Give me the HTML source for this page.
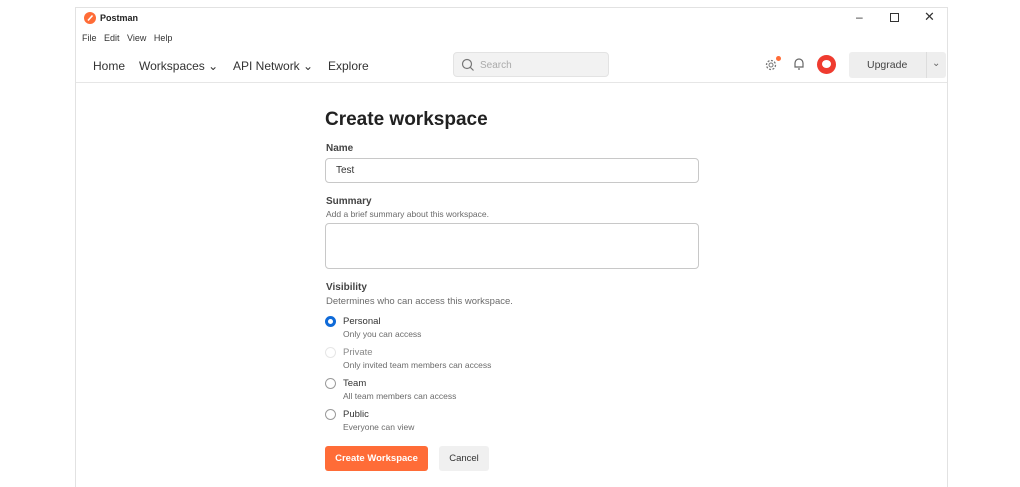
<!DOCTYPE html>
<html><head><meta charset="utf-8"><style>
*{margin:0;padding:0;box-sizing:border-box}
body{width:1020px;height:481px;background:#fff;font-family:"Liberation Sans",sans-serif;position:relative;overflow:hidden;color:#212121}
.a{position:absolute;white-space:nowrap}
.win{position:absolute;left:75px;top:7px;width:873px;height:480px;border:1px solid #e2e2e2;border-bottom:none}
.nav{font-size:12px;color:#333}
.lbl{font-size:10px;font-weight:bold;color:#444}
.sub{font-size:8.5px;color:#6b6b6b}
.inp{position:absolute;left:325px;width:374px;border:1px solid #c8c8c8;border-radius:4px;background:#fff}
.rad{position:absolute;left:325px;width:11px;height:11px;border:1px solid #9a9a9a;border-radius:50%}
.rt{font-size:9.5px;color:#333}
</style></head><body>
<div class="win"></div>
<svg class="a" style="left:84px;top:12px" width="12" height="12"><circle cx="6" cy="6" r="6" fill="#ff6c37"/><path d="M4 8.5 L8.5 3.5" stroke="#fff" stroke-width="1.6"/></svg>
<div class="a" style="left:100px;top:13px;font-size:9px;font-weight:bold;color:#222">Postman</div>
<div class="a" style="left:82px;top:33px;font-size:9px;color:#333;word-spacing:5px">File Edit View Help</div>
<div class="a" style="left:856px;top:10px;font-size:12px;color:#333">–</div>
<div class="a" style="left:890px;top:13px;width:9px;height:9px;border:1.3px solid #333"></div>
<div class="a" style="left:924px;top:9px;font-size:13px;color:#333">✕</div>
<div class="a nav" style="left:93px;top:59px">Home</div>
<div class="a nav" style="left:139px;top:59px">Workspaces ⌄</div>
<div class="a nav" style="left:233px;top:59px">API Network ⌄</div>
<div class="a nav" style="left:328px;top:59px">Explore</div>
<div class="a" style="left:453px;top:52px;width:156px;height:25px;background:#f2f2f2;border:1px solid #e3e3e3;border-radius:4px"></div>
<svg class="a" style="left:461px;top:58px" width="14" height="14"><circle cx="6" cy="6" r="4.5" fill="none" stroke="#777" stroke-width="1.2"/><path d="M9.3 9.3 L12.5 12.5" stroke="#777" stroke-width="1.2"/></svg>
<div class="a" style="left:480px;top:60px;font-size:10px;color:#aaa">Search</div>
<div class="a" style="left:76px;top:82px;width:871px;height:1px;background:#e6e6e6"></div>
<svg class="a" style="left:764px;top:58px" width="14" height="14"><circle cx="7" cy="7" r="4.5" fill="none" stroke="#777" stroke-width="1.3" stroke-dasharray="2 1.5"/><circle cx="7" cy="7" r="2" fill="none" stroke="#777"/></svg>
<div class="a" style="left:776px;top:56px;width:5px;height:5px;border-radius:50%;background:#ff6c37"></div>
<svg class="a" style="left:793px;top:57px" width="12" height="14"><path d="M2 10 L2 6 A4 4 0 0 1 10 6 L10 10 Z M5 12 L7 12" fill="none" stroke="#666" stroke-width="1.2"/></svg>
<div class="a" style="left:817px;top:55px;width:19px;height:19px;border-radius:50%;background:#ef3b2f"></div>
<div class="a" style="left:822px;top:60px;width:9px;height:8px;border-radius:50%;background:#fff"></div>
<div class="a" style="left:849px;top:52px;width:97px;height:26px;background:#eeeeee;border-radius:3px"></div>
<div class="a" style="left:926px;top:52px;width:1px;height:26px;background:#ddd"></div>
<div class="a" style="left:867px;top:59px;font-size:10.5px;color:#444">Upgrade</div>
<div class="a" style="left:932px;top:58px;font-size:10px;color:#666">⌄</div>
<div class="a" style="left:325px;top:109px;font-size:19px;font-weight:bold;color:#212121">Create workspace</div>
<div class="a lbl" style="left:326px;top:143px">Name</div>
<div class="inp" style="top:158px;height:25px"></div>
<div class="a" style="left:336px;top:165px;font-size:10px;color:#333">Test</div>
<div class="a lbl" style="left:326px;top:196px">Summary</div>
<div class="a sub" style="left:326px;top:209px">Add a brief summary about this workspace.</div>
<div class="inp" style="top:223px;height:46px"></div>
<div class="a lbl" style="left:326px;top:282px">Visibility</div>
<div class="a sub" style="left:326px;top:296px;font-size:9.5px">Determines who can access this workspace.</div>
<div class="rad" style="top:316px;border:3px solid #0f6ad8"></div>
<div class="a rt" style="left:343px;top:316px">Personal</div>
<div class="a sub" style="left:343px;top:329px">Only you can access</div>
<div class="rad" style="top:347px;border-color:#e6e6e6"></div>
<div class="a rt" style="left:343px;top:347px;color:#888">Private</div>
<div class="a sub" style="left:343px;top:360px">Only invited team members can access</div>
<div class="rad" style="top:378px"></div>
<div class="a rt" style="left:343px;top:378px">Team</div>
<div class="a sub" style="left:343px;top:391px">All team members can access</div>
<div class="rad" style="top:409px"></div>
<div class="a rt" style="left:343px;top:409px">Public</div>
<div class="a sub" style="left:343px;top:422px">Everyone can view</div>
<div class="a" style="left:325px;top:446px;width:103px;height:25px;background:#ff6c37;border-radius:3px;color:#fff;font-size:9.5px;font-weight:bold;text-align:center;line-height:25px">Create Workspace</div>
<div class="a" style="left:439px;top:446px;width:50px;height:25px;background:#f0f0f0;border-radius:3px;color:#333;font-size:9.5px;text-align:center;line-height:25px">Cancel</div>
</body></html>
